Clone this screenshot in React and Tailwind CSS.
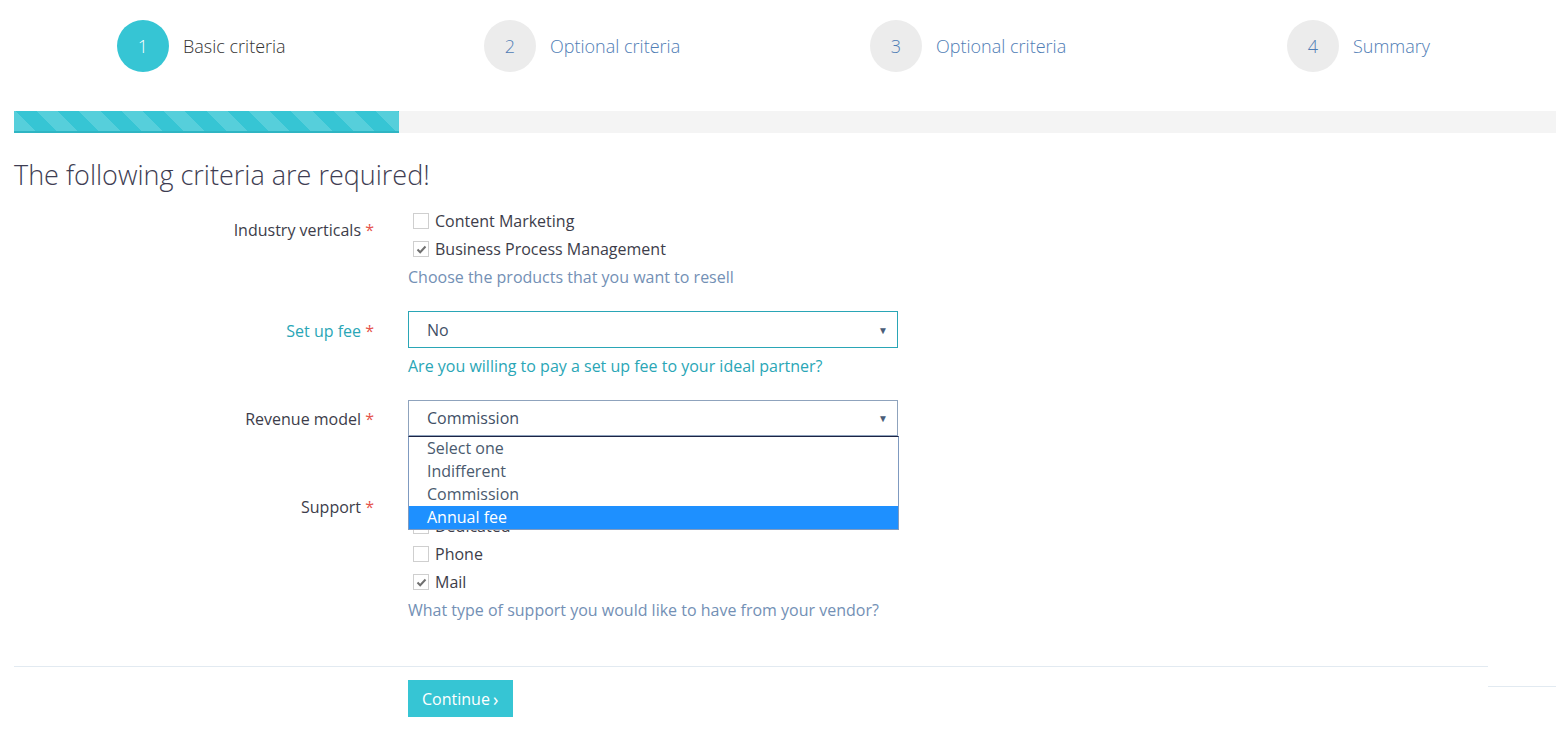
import { useState } from "react";

const steps = [
    { n: 1, label: "Basic criteria", active: true },
    { n: 2, label: "Optional criteria" },
    { n: 3, label: "Optional criteria" },
    { n: 4, label: "Summary" },
];

const Check = ({ checked, label }) => (
    <div className="flex items-center h-[28px]">
        <span className="ml-[5px] w-[16px] h-[16px] border border-[#cfcfcf] bg-white flex items-center justify-center">
            {checked && (
                <svg width="11" height="9" viewBox="0 0 11 9">
                    <path d="M1.5 4.5 L4.2 7.2 L9.5 1.5" fill="none" stroke="#707070" strokeWidth="2" />
                </svg>
            )}
        </span>
        <span className="ml-[6px] text-[16px] text-[#3d3d4a]">{label}</span>
    </div>
);

const Label = ({ text, focus, top }) => (
    <div className={`w-[394px] shrink-0 text-right pr-[34px] text-[16px] leading-[22px] ${top} ${focus ? "text-[#2aa6b6]" : "text-[#3d3d4a]"}`}>
        {text} <span className="text-[#e5534b]">*</span>
    </div>
);

const Caret = () => <span className="absolute right-[9px] top-1/2 -translate-y-1/2 text-[10px] text-[#4a5d78]">▼</span>;

const App = () => {
    const [open] = useState(true);

    return (
        <div className="w-[1568px] h-[733px] bg-white pl-[14px] pr-[12px] font-['Open_Sans',sans-serif] overflow-hidden">
            {/* Steps */}
            <div className="grid grid-cols-[367px_386px_417px_auto] pt-[20px] pl-[103px]">
                {steps.map((s) => (
                    <div key={s.n} className="flex items-center">
                        <div
                            className={`w-[52px] h-[52px] rounded-full flex items-center justify-center text-[18px] font-light ${
                                s.active ? "bg-[#36c5d4] text-white" : "bg-[#ececec] text-[#4f7db5]"
                            }`}
                        >
                            {s.n}
                        </div>
                        <span className={`ml-[14px] text-[18px] font-light ${s.active ? "text-[#333]" : "text-[#4f7db5]"}`}>
                            {s.label}
                        </span>
                    </div>
                ))}
            </div>

            {/* Progress */}
            <div className="mt-[39px] h-[22px] bg-[#f4f4f4]">
                <div className="w-[385px] h-full bg-[image:repeating-linear-gradient(45deg,#56cfdb_0_15px,#36c5d4_15px_30px)] border-b-2 border-[#2fb5c3]" />
            </div>

            <h1 className="mt-[24px] text-[27px] leading-[36px] font-light text-[#3e3d52]">The following criteria are required!</h1>

            {/* Form */}
            <div className="mt-[14px] flex flex-col">
                <div className="flex">
                    <Label text="Industry verticals" top="pt-[12px]" />
                    <div className="w-[490px]">
                        <Check label="Content Marketing" />
                        <Check checked label="Business Process Management" />
                        <p className="text-[16px] leading-[28px] text-[#7390b5]">Choose the products that you want to resell</p>
                    </div>
                </div>

                <div className="flex mt-[20px]">
                    <Label text="Set up fee" focus top="pt-[9px]" />
                    <div className="w-[490px]">
                        <div className="relative h-[37px] border border-[#2aa6b6] flex items-center pl-[18px] text-[16px] text-[#3f4f66]">
                            No
                            <Caret />
                        </div>
                        <p className="mt-[7px] text-[16px] leading-[22px] text-[#2aa6b6]">Are you willing to pay a set up fee to your ideal partner?</p>
                    </div>
                </div>

                <div className="flex mt-[23px]">
                    <Label text="Revenue model" top="pt-[8px]" />
                    <div className="w-[490px] relative z-10">
                        <div className="relative h-[36px] border border-[#8fa3bd] flex items-center pl-[18px] text-[16px] text-[#3f4f66]">
                            Commission
                            <Caret />
                        </div>
                        <p className="mt-[7px] text-[16px] leading-[22px] text-[#7390b5]">How would you like to be paid?</p>
                        {open && (
                            <ul className="absolute left-0 top-[36px] w-[491px] bg-white border border-[#7f9ac0] border-t-[#1c2444] text-[16px] leading-[23px] text-[#4a5a6e]">
                                <li className="pl-[18px]">Select one</li>
                                <li className="pl-[18px]">Indifferent</li>
                                <li className="pl-[18px]">Commission</li>
                                <li className="pl-[18px] bg-[#1e90ff] text-white">Annual fee</li>
                            </ul>
                        )}
                    </div>
                </div>

                <div className="flex mt-[19px]">
                    <Label text="Support" top="pt-[12px]" />
                    <div className="w-[490px]">
                        <Check label="Shared" />
                        <Check label="Dedicated" />
                        <Check label="Phone" />
                        <Check checked label="Mail" />
                        <p className="text-[16px] leading-[28px] text-[#7390b5]">What type of support you would like to have from your vendor?</p>
                    </div>
                </div>
            </div>

            {/* Footer */}
            <div className="mt-[42px] flex">
                <div className="flex-1 border-t border-[#e2eaf1]" />
                <div className="w-[68px] mt-[20px] border-t border-[#e2eaf1]" />
            </div>
            <div className="mt-[-7px] pl-[394px]">
                <button className="h-[37px] pl-[14px] pr-[15px] bg-[#36c5d4] text-white text-[16px] flex items-center">
                    Continue<span className="ml-[3px] text-[18px] leading-none">›</span>
                </button>
            </div>
        </div>
    );
};

export default App;
